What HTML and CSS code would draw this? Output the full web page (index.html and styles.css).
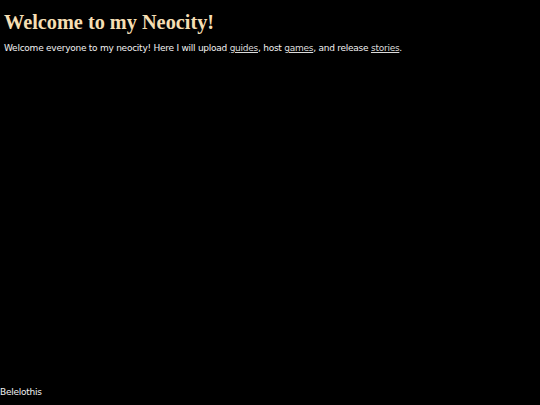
FILE: index.html
```html
<!DOCTYPE html>
<html>
<head>
<meta charset="utf-8">
<link rel="stylesheet" href="styles.css">
</head>
<body>
<main class="content">
<h1 class="title">Welcome to my Neocity!</h1>
<p class="intro">Welcome everyone to my neocity! Here I will upload <a href="#">guides</a>, host <a href="#">games</a>, and release <a href="#">stories</a>.</p>
</main>
<footer class="footer">Belelothis</footer>
</body>
</html>
```
FILE: styles.css
```css
html, body {
  margin: 0;
  padding: 0;
  height: 100%;
  background: #000;
}
body {
  display: flex;
  flex-direction: column;
  color: #f2f2f2;
  font-family: "DejaVu Sans", Verdana, sans-serif;
  font-size: 9px;
  letter-spacing: -0.25px;
}
.content {
  flex: 1;
  padding: 0 4px;
}
.title {
  margin: 10px 0 0;
  font-family: "Liberation Serif", Georgia, serif;
  font-weight: bold;
  font-size: 20.3px;
  line-height: 24px;
  letter-spacing: 0;
  color: #f5deb3;
}
.intro {
  margin: 8px 0 0;
  line-height: 12px;
}
.intro a {
  color: #dcdcdc;
  text-decoration: underline;
}
.footer {
  padding: 0 0 7px;
  line-height: 12px;
}
```
